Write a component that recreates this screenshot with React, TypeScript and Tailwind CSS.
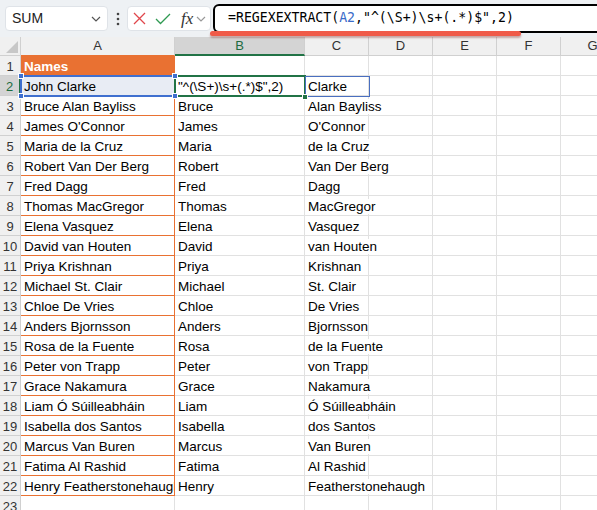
import React from "react";

const rows: [string, string, string][] = [
  ["John Clarke", '"^(\\S+)\\s+(.*)$",2)', "Clarke"],
  ["Bruce Alan Bayliss", "Bruce", "Alan Bayliss"],
  ["James O'Connor", "James", "O'Connor"],
  ["Maria de la Cruz", "Maria", "de la Cruz"],
  ["Robert Van Der Berg", "Robert", "Van Der Berg"],
  ["Fred Dagg", "Fred", "Dagg"],
  ["Thomas MacGregor", "Thomas", "MacGregor"],
  ["Elena Vasquez", "Elena", "Vasquez"],
  ["David van Houten", "David", "van Houten"],
  ["Priya Krishnan", "Priya", "Krishnan"],
  ["Michael St. Clair", "Michael", "St. Clair"],
  ["Chloe De Vries", "Chloe", "De Vries"],
  ["Anders Bjornsson", "Anders", "Bjornsson"],
  ["Rosa de la Fuente", "Rosa", "de la Fuente"],
  ["Peter von Trapp", "Peter", "von Trapp"],
  ["Grace Nakamura", "Grace", "Nakamura"],
  ["Liam Ó Súilleabháin", "Liam", "Ó Súilleabháin"],
  ["Isabella dos Santos", "Isabella", "dos Santos"],
  ["Marcus Van Buren", "Marcus", "Van Buren"],
  ["Fatima Al Rashid", "Fatima", "Al Rashid"],
  ["Henry Featherstonehaugh", "Henry", "Featherstonehaugh"],
];

const Chevron = () => (
  <svg width="10" height="6" viewBox="0 0 10 6">
    <path d="M1 1 L5 5 L9 1" fill="none" stroke="#555" strokeWidth="1.2" />
  </svg>
);

function Toolbar() {
  return (
    <div className="h-[37px] bg-[#eef1f4] flex items-center pl-[5px]">
      <div className="shrink-0 w-[103px] h-[25px] bg-white rounded-[4px] border border-[#dfe3e8] flex items-center justify-between pl-[6px] pr-[6px] text-[14px] text-[#222]">
        <span>SUM</span>
        <Chevron />
      </div>
      <div className="shrink-0 w-[19px] flex justify-center">
        <svg width="4" height="14" viewBox="0 0 4 14">
          <circle cx="2" cy="2" r="1.3" fill="#444" />
          <circle cx="2" cy="7" r="1.3" fill="#444" />
          <circle cx="2" cy="12" r="1.3" fill="#444" />
        </svg>
      </div>
      <div className="shrink-0 w-[84px] h-[25px] bg-white rounded-[4px] border border-[#dfe3e8] flex items-center pl-[5px]">
        <svg width="13" height="13" viewBox="0 0 13 13">
          <path d="M1 1 L12 12 M12 1 L1 12" stroke="#e0474c" strokeWidth="1.3" fill="none" />
        </svg>
        <svg width="16" height="12" viewBox="0 0 16 12" className="ml-[9px]">
          <path d="M1 6 L5.5 10.5 L15 1" stroke="#2f9a52" strokeWidth="1.3" fill="none" />
        </svg>
        <span className="ml-[10px] text-[17px] italic leading-none text-[#333] font-['Liberation_Serif',serif]">fx</span>
        <span className="ml-[3px] flex items-center">
          <svg width="10" height="6" viewBox="0 0 10 6">
            <path d="M1 1 L5 5 L9 1" fill="none" stroke="#999" strokeWidth="1.2" />
          </svg>
        </span>
      </div>
      <div className="shrink-0 ml-[2px] w-[400px] h-[29px] border-2 border-black rounded-[6px] bg-white flex items-center pl-[13px] pb-[2px] text-[13.2px] text-black font-['DejaVu_Sans_Mono',monospace] whitespace-pre">
        <span>=REGEXEXTRACT(</span>
        <span className="text-[#3a6bc9]">A2</span>
        <span>{',"^(\\S+)\\s+(.*)$",2)'}</span>
      </div>
    </div>
  );
}

const colLetters = ["A", "B", "C", "D", "E", "F", "G"];

export default function App() {
  const hdr = "h-[19px] border-r border-b border-[#d0d0d0] bg-[#f0f0f0] flex items-center justify-center text-[13px] text-[#333]";
  const cellBase = "h-[20px] border-r border-b border-[#e1e1e1] flex items-end pb-[1px] leading-[15px] pl-[3px] text-[13.5px] text-black whitespace-nowrap";
  const rowHdr = "h-[20px] border-b border-[#d0d0d0] flex items-end justify-center pb-[1px] leading-[15px] text-[13px]";

  const cells: React.ReactNode[] = [];
  cells.push(
    <div key="corner" className="h-[19px] border-r border-b border-[#d0d0d0] bg-[#f0f0f0] relative">
      <svg width="21" height="19" viewBox="0 0 21 19" className="absolute inset-0">
        <polygon points="18,4 18,16 6,16" fill="#c7c7c7" />
      </svg>
    </div>
  );
  colLetters.forEach((l) => {
    if (l === "B") {
      cells.push(
        <div key={"h" + l} className="h-[19px] border-r border-[#d0d0d0] border-b-2 border-b-[#217346] bg-[#d4d4d4] flex items-center justify-center text-[13px] text-[#1e6b40] pt-[1px]">
          {l}
        </div>
      );
    } else {
      cells.push(
        <div key={"h" + l} className={hdr + (l === "A" ? " border-b-[#e97132]" : "")}>
          {l}
        </div>
      );
    }
  });

  for (let r = 1; r <= 23; r++) {
    const data = r >= 2 && r <= 22 ? rows[r - 2] : null;
    if (r === 2) {
      cells.push(
        <div key={"r" + r} className={rowHdr + " border-r-2 border-r-[#217346] bg-[#d4d4d4] text-[#1e6b40]"}>
          {r}
        </div>
      );
    } else {
      cells.push(
        <div key={"r" + r} className={rowHdr + " border-r bg-[#f0f0f0] text-[#333]"}>
          {r}
        </div>
      );
    }
    if (r === 1) {
      cells.push(
        <div key={"a" + r} className={cellBase + " bg-[#e97132] border-[#e97132] text-white font-bold"}>
          Names
        </div>
      );
    } else if (data) {
      cells.push(
        <div key={"a" + r} className={cellBase + " overflow-hidden border-[#e97132]" + (r === 2 ? " bg-[#e8ecf4]" : "")}>
          {data[0]}
        </div>
      );
    } else {
      cells.push(<div key={"a" + r} className={cellBase} />);
    }
    cells.push(
      <div key={"b" + r} className={cellBase + " overflow-hidden"}>
        {data ? data[1] : ""}
      </div>
    );
    cells.push(
      <div key={"c" + r} className={cellBase + " overflow-visible"}>
        {data ? <span className="relative z-10 bg-white">{data[2]}</span> : null}
      </div>
    );
    for (let c = 0; c < 4; c++) {
      cells.push(<div key={"x" + r + "-" + c} className={cellBase} />);
    }
  }

  return (
    <div className="relative w-[597px] h-[510px] overflow-hidden bg-white font-['Liberation_Sans',Arial,sans-serif]">
      <Toolbar />
      <div className="relative">
        <div className="grid grid-cols-[21px_154px_130px_64px_64px_64px_64px_64px] w-[625px]">
          {cells}
        </div>
        <div className="absolute left-[20px] top-[38px] w-[156px] h-[22px] border-2 border-[#3f6fcf] z-20 pointer-events-none" />
        {[
          "left-[18px] top-[36px]",
          "left-[172px] top-[36px]",
          "left-[18px] top-[56px]",
          "left-[172px] top-[56px]",
        ].map((p) => (
          <div key={p} className={"absolute w-[6px] h-[6px] bg-[#3f6fcf] border border-white z-30 " + p} />
        ))}
        <div className="absolute left-[174px] top-[38px] w-[132px] h-[22px] border-2 border-[#217346] z-20" />
        <div className="absolute left-[302px] top-[57px] w-[6px] h-[6px] bg-[#217346] border border-white z-30" />
        <div className="absolute left-[305px] top-[39px] w-[65px] h-[21px] border border-[#4a6fc0] z-20" />
      </div>
      <div className="absolute left-[210px] top-[31px] w-[311px] h-[5px] rounded-full bg-[#f05a48] shadow-[0_2px_2px_rgba(120,30,20,0.35)] z-40" />
    </div>
  );
}
